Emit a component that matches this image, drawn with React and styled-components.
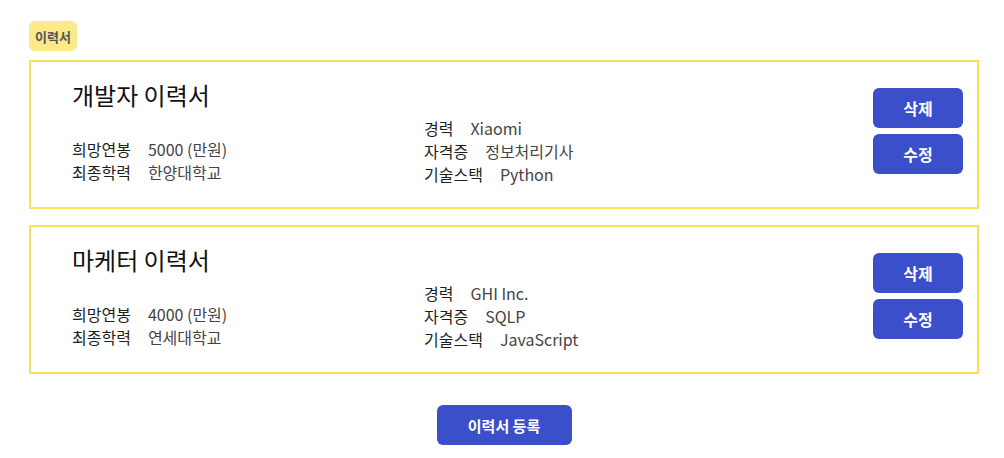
import React from "react";
import styled, { createGlobalStyle } from "styled-components";

const GlobalStyle = createGlobalStyle`
  * { box-sizing: border-box; }
  body {
    margin: 0;
    background: #fff;
    font-family: "Noto Sans CJK KR", "Noto Sans", sans-serif;
    color: #222;
  }
`;

const Wrapper = styled.div`
  padding: 21px 25px 0 29px;
`;

const Badge = styled.div`
  display: flex;
  align-items: center;
  justify-content: center;
  width: 48px;
  height: 30px;
  margin-bottom: 9px;
  border-radius: 6px;
  background: #fce98a;
  color: #555;
  font-size: 13px;
  font-weight: 700;
`;

const CardList = styled.div`
  display: flex;
  flex-direction: column;
  gap: 16px;
`;

const Card = styled.div`
  display: flex;
  height: 149px;
  padding: 16px 14px 21px 41px;
  border: 2px solid #f8e05a;
`;

const MainColumn = styled.div`
  width: 352px;
  display: flex;
  flex-direction: column;
`;

const Title = styled.h2`
  margin: 0 0 26px;
  font-size: 24px;
  line-height: 34px;
  font-weight: 400;
  color: #111;
`;

const InfoColumn = styled.div`
  flex: 1;
  display: flex;
  flex-direction: column;
  justify-content: flex-end;
`;

const Row = styled.div`
  display: flex;
  gap: 17px;
  font-size: 16px;
  line-height: 23px;
`;

const Label = styled.span`
  color: #1e1e1e;
`;

const Value = styled.span`
  color: #444;
`;

const Actions = styled.div`
  display: flex;
  flex-direction: column;
  gap: 6px;
  padding-top: 10px;
`;

const Button = styled.button`
  width: ${(p) => (p.$wide ? "135px" : "90px")};
  height: 40px;
  border: none;
  border-radius: 6px;
  background: #3b4fca;
  color: #fff;
  font-family: inherit;
  font-size: ${(p) => (p.$wide ? "15px" : "16px")};
  font-weight: 700;
  cursor: pointer;
`;

const Footer = styled.div`
  display: flex;
  justify-content: center;
  margin-top: 31px;
`;

const resumes = [
  {
    title: "개발자 이력서",
    salary: "5000 (만원)",
    school: "한양대학교",
    career: "Xiaomi",
    license: "정보처리기사",
    stack: "Python",
  },
  {
    title: "마케터 이력서",
    salary: "4000 (만원)",
    school: "연세대학교",
    career: "GHI Inc.",
    license: "SQLP",
    stack: "JavaScript",
  },
];

function Info({ label, value }) {
  return (
    <Row>
      <Label>{label}</Label>
      <Value>{value}</Value>
    </Row>
  );
}

function ResumeCard({ resume }) {
  return (
    <Card>
      <MainColumn>
        <Title>{resume.title}</Title>
        <Info label="희망연봉" value={resume.salary} />
        <Info label="최종학력" value={resume.school} />
      </MainColumn>
      <InfoColumn>
        <Info label="경력" value={resume.career} />
        <Info label="자격증" value={resume.license} />
        <Info label="기술스택" value={resume.stack} />
      </InfoColumn>
      <Actions>
        <Button>삭제</Button>
        <Button>수정</Button>
      </Actions>
    </Card>
  );
}

export default function App() {
  return (
    <>
      <GlobalStyle />
      <Wrapper>
        <Badge>이력서</Badge>
        <CardList>
          {resumes.map((r) => (
            <ResumeCard key={r.title} resume={r} />
          ))}
        </CardList>
        <Footer>
          <Button $wide>이력서 등록</Button>
        </Footer>
      </Wrapper>
    </>
  );
}
